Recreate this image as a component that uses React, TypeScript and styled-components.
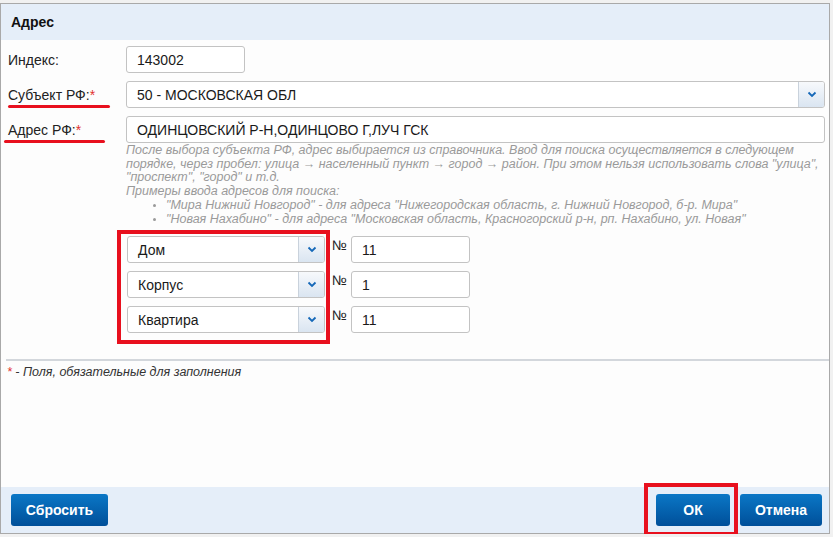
import * as React from "react";
import styled, { createGlobalStyle } from "styled-components";

const GlobalStyle = createGlobalStyle`
  html, body {
    margin: 0;
    padding: 0;
    background: #f1f1f1;
    font-family: "Liberation Sans", Arial, sans-serif;
  }
`;

const Dialog = styled.div`
  margin-top: 3px;
  width: 830px;
  height: 531px;
  border: 1px solid #a9a9a9;
  background: #fdfdfd;
  display: flex;
  flex-direction: column;
  box-sizing: border-box;
`;

const Header = styled.div`
  height: 36px;
  background: #e5eef9;
  padding-left: 10px;
  display: flex;
  align-items: center;
  font-size: 14px;
  font-weight: bold;
  color: #111;
  flex-shrink: 0;
`;

const Body = styled.div`
  flex: 1;
  padding: 6px 0 0 0;
`;

const Form = styled.div`
  display: grid;
  grid-template-columns: 118px 699px;
  row-gap: 8px;
  padding-left: 7px;
`;

const Label = styled.div`
  font-size: 14px;
  color: #222;
  padding-top: 6px;
  position: relative;
  white-space: nowrap;
`;

const Required = styled.span`
  color: #e23030;
`;

const Underline = styled.span<{ $left: number; $width: number }>`
  position: absolute;
  left: ${(p) => p.$left}px;
  top: 24px;
  width: ${(p) => p.$width}px;
  height: 3px;
  border-radius: 2px;
  background: #e8101e;
`;

const TextInput = styled.div<{ $width?: number }>`
  box-sizing: border-box;
  height: 27px;
  width: ${(p) => (p.$width ? `${p.$width}px` : "100%")};
  border: 1px solid #c3c3c3;
  border-radius: 3px;
  background: #fff;
  padding-left: 10px;
  display: flex;
  align-items: center;
  font-size: 14px;
  color: #1a1a1a;
  white-space: nowrap;
`;

const SelectBox = styled.div<{ $width?: number }>`
  box-sizing: border-box;
  height: 27px;
  width: ${(p) => (p.$width ? `${p.$width}px` : "100%")};
  border: 1px solid #c3c3c3;
  border-radius: 3px;
  background: #fff;
  display: flex;
  align-items: stretch;
  font-size: 14px;
  color: #1a1a1a;
  overflow: hidden;
`;

const SelectValue = styled.div`
  flex: 1;
  padding-left: 10px;
  display: flex;
  align-items: center;
  white-space: nowrap;
`;

const SelectButton = styled.div`
  width: 25px;
  border-left: 1px solid #c9d2dc;
  background: linear-gradient(#f7f9fc, #dae5f1);
  display: flex;
  align-items: center;
  justify-content: center;
`;

const Hint = styled.div`
  grid-column: 2;
  margin-top: -7px;
  font-size: 12.5px;
  line-height: 13.7px;
  font-style: italic;
  color: #9a9a9a;
`;

const Examples = styled.ul`
  margin: 0;
  padding-left: 40px;
  list-style: disc;
  li::marker {
    font-size: 10px;
  }
`;

const Units = styled.div`
  grid-column: 2;
  display: flex;
  margin-top: 2px;
  margin-left: 1px;
`;

const SelectColumn = styled.div`
  width: 198px;
  display: flex;
  flex-direction: column;
  gap: 8px;
  position: relative;

  &::after {
    content: "";
    position: absolute;
    inset: -6px -5px -11px -10px;
    border: 4px solid #e8101e;
    pointer-events: none;
  }
`;

const NumberColumn = styled.div`
  display: flex;
  flex-direction: column;
  gap: 8px;
  margin-left: 7px;
`;

const NumberRow = styled.div`
  display: flex;
  align-items: flex-start;
  gap: 5px;
`;

const NumSign = styled.span`
  font-size: 14px;
  color: #222;
  padding-top: 1px;
  width: 14px;
`;

const Separator = styled.div`
  height: 2px;
  background: #d3d7dc;
  margin: 26px 0 0 5px;
`;

const Footnote = styled.div`
  margin: 4px 0 0 6px;
  font-size: 12.5px;
  font-style: italic;
  color: #333;
`;

const Footer = styled.div`
  height: 46px;
  background: #e5eef9;
  display: flex;
  align-items: center;
  padding: 0 7px 0 10px;
  flex-shrink: 0;
`;

const Spacer = styled.div`
  flex: 1;
`;

const Button = styled.button<{ $width: number; $marked?: boolean }>`
  position: relative;
  width: ${(p) => p.$width}px;
  height: 32px;
  border: none;
  border-radius: 3px;
  background: linear-gradient(#0a77c6, #004f99);
  color: #fff;
  font-family: "Liberation Sans", Arial, sans-serif;
  font-weight: bold;
  font-size: 14px;
  padding: 0;
  margin-left: 10px;
  &:first-child {
    margin-left: 0;
  }

  ${(p) =>
    p.$marked &&
    `
    &::after {
      content: "";
      position: absolute;
      inset: -11px -8px -10px -12px;
      border: 4px solid #e8101e;
      pointer-events: none;
    }
  `}
`;

const Chevron = () => (
  <svg width="10" height="7" viewBox="0 0 10 7">
    <polyline points="1.5,1.5 5,5 8.5,1.5" fill="none" stroke="#1568b8" strokeWidth="1.8" />
  </svg>
);

const Select = ({ value, width }: { value: string; width?: number }) => (
  <SelectBox $width={width}>
    <SelectValue>{value}</SelectValue>
    <SelectButton>
      <Chevron />
    </SelectButton>
  </SelectBox>
);

const units = [
  { kind: "Дом", num: "11" },
  { kind: "Корпус", num: "1" },
  { kind: "Квартира", num: "11" },
];

export default function App() {
  return (
    <>
      <GlobalStyle />
      <Dialog>
        <Header>Адрес</Header>
        <Body>
          <Form>
            <Label>Индекс:</Label>
            <TextInput $width={119}>143002</TextInput>

            <Label>
              Субъект РФ:<Required>*</Required>
              <Underline $left={0} $width={102} />
            </Label>
            <Select value="50 - МОСКОВСКАЯ ОБЛ" />

            <Label>
              Адрес РФ:<Required>*</Required>
              <Underline $left={-4} $width={101} />
            </Label>
            <TextInput>ОДИНЦОВСКИЙ Р-Н,ОДИНЦОВО Г,ЛУЧ ГСК</TextInput>

            <Hint>
              После выбора субъекта РФ, адрес выбирается из справочника. Ввод для поиска осуществляется в
              следующем порядке, через пробел: улица → населенный пункт → город → район. При этом нельзя
              использовать слова "улица", "проспект", "город" и т.д.
              <br />
              Примеры ввода адресов для поиска:
              <Examples>
                <li>"Мира Нижний Новгород" - для адреса "Нижегородская область, г. Нижний Новгород, б-р. Мира"</li>
                <li>"Новая Нахабино" - для адреса "Московская область, Красногорский р-н, рп. Нахабино, ул. Новая"</li>
              </Examples>
            </Hint>

            <Units>
              <SelectColumn>
                {units.map((u) => (
                  <Select key={u.kind} value={u.kind} />
                ))}
              </SelectColumn>
              <NumberColumn>
                {units.map((u) => (
                  <NumberRow key={u.kind}>
                    <NumSign>№</NumSign>
                    <TextInput $width={119}>{u.num}</TextInput>
                  </NumberRow>
                ))}
              </NumberColumn>
            </Units>
          </Form>
          <Separator />
          <Footnote>
            <Required>*</Required> - Поля, обязательные для заполнения
          </Footnote>
        </Body>
        <Footer>
          <Button $width={97}>Сбросить</Button>
          <Spacer />
          <Button $width={74} $marked>
            ОК
          </Button>
          <Button $width={82}>Отмена</Button>
        </Footer>
      </Dialog>
    </>
  );
}
